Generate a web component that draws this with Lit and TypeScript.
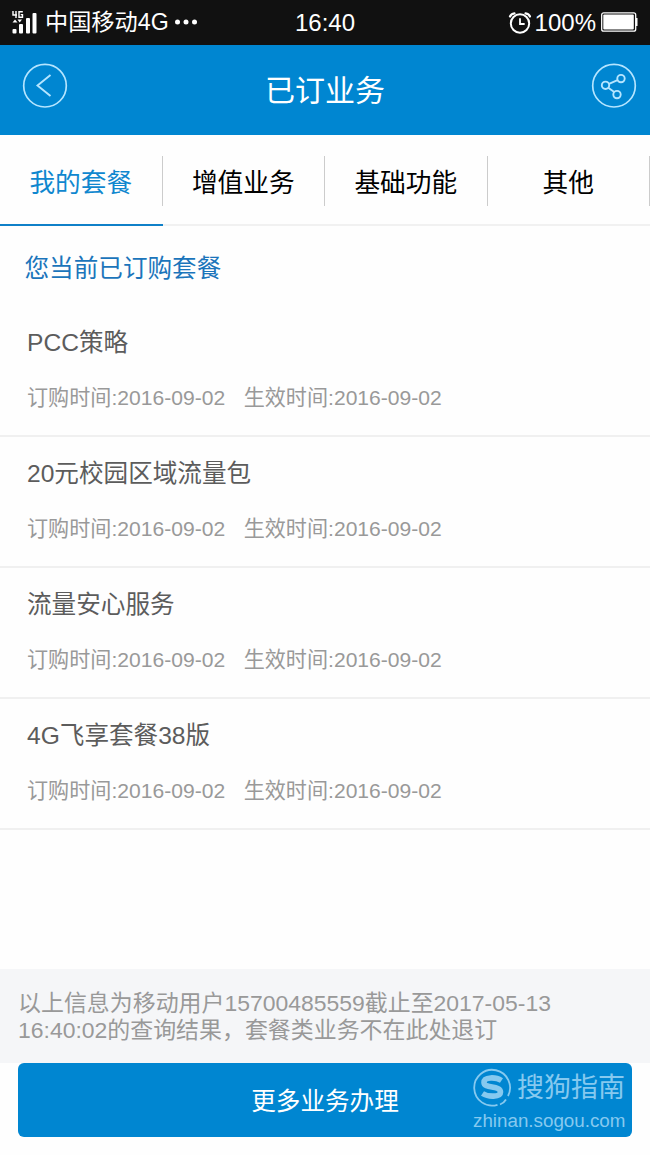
import { LitElement, html, css } from "lit";
import { customElement, state } from "lit/decorators.js";
import { classMap } from "lit/directives/class-map.js";

interface Plan {
  name: string;
  ordered: string;
  effective: string;
}

const TABS = ["我的套餐", "增值业务", "基础功能", "其他"];

const PLANS: Plan[] = [
  { name: "PCC策略", ordered: "2016-09-02", effective: "2016-09-02" },
  { name: "20元校园区域流量包", ordered: "2016-09-02", effective: "2016-09-02" },
  { name: "流量安心服务", ordered: "2016-09-02", effective: "2016-09-02" },
  { name: "4G飞享套餐38版", ordered: "2016-09-02", effective: "2016-09-02" },
];

@customElement("status-bar")
class StatusBar extends LitElement {
  static styles = css`
    :host {
      display: grid;
      grid-template-columns: 1fr auto 1fr;
      align-items: center;
      height: 45px;
      box-sizing: border-box;
      padding: 0 12px;
      background: #111;
      color: #fff;
      line-height: 45px;
      font-size: 24px;
    }
    .side { display: flex; align-items: center; height: 45px; }
    .end { justify-content: flex-end; }
    .carrier { margin-left: 8px; font-size: 23.2px; white-space: nowrap; }
    .dots { margin-left: 5px; margin-top: -1px; }
    .alarm { margin-right: 3px; }
    .battery { margin-left: 4px; margin-top: -1px; }
    svg { display: block; flex: none; }
  `;

  render() {
    return html`
      <div class="side">
        <svg width="25" height="24" viewBox="0 0 25 24" fill="#fff">
          <path d="M1 0v4h4M4 0v7M10.800 .7H7v5.600h3.500V3.600H8.700" fill="none" stroke="#fff" stroke-width="1.400" />
          <path d="M.5 11.500 3 8.500 5.500 11.500ZM5.500 8.500h4.500L7.700 11.500Z" />
          <rect x=".5" y="18" width="4" height="4.500" rx="1" />
          <rect x="7" y="13" width="4" height="9.500" rx="1" />
          <rect x="14" y="7" width="4" height="15.500" rx="1" />
          <rect x="20.500" y="2" width="4" height="20.500" rx="1" />
        </svg>
        <span class="carrier">中国移动4G</span>
        <svg class="dots" width="24" height="6" viewBox="0 0 24 6" fill="#fff">
          <circle cx="3.500" cy="3" r="2.500" />
          <circle cx="12" cy="3" r="2.500" />
          <circle cx="20.500" cy="3" r="2.500" />
        </svg>
      </div>
      <span>16:40</span>
      <div class="side end">
        <svg class="alarm" width="24" height="22" viewBox="0 0 24 22" fill="none" stroke="#fff" stroke-linecap="round">
          <circle cx="12" cy="11.500" r="9.200" stroke-width="2" />
          <path d="M12 7v5h4" stroke-width="1.800" />
          <path d="M2 4.500Q3 1.800 6.500 1.300M17.500 1.300Q21 1.800 22 4.500" stroke-width="2.200" />
        </svg>
        <span>100%</span>
        <svg class="battery" width="38" height="20" viewBox="0 0 38 20">
          <rect x="1.700" y=".8" width="34" height="18.400" rx="2" fill="none" stroke="#fff" stroke-width="1.300" />
          <rect x="3.300" y="2.500" width="30.500" height="15" rx="1" fill="#fff" />
          <path d="M36 6h1.500v8H36z" fill="#fff" />
        </svg>
      </div>
    `;
  }
}

@customElement("title-bar")
class TitleBar extends LitElement {
  static styles = css`
    :host {
      display: flex;
      align-items: center;
      justify-content: space-between;
      height: 90px;
      box-sizing: border-box;
      padding: 0 13px 9px 22px;
      background: #0086d1;
      color: #fff;
    }
    .title {
      margin: 10px 9px 0 0;
      font-size: 30px;
      line-height: 44px;
      font-weight: 400;
    }
    svg { display: block; }
  `;

  render() {
    return html`
      <svg width="46" height="46" viewBox="0 0 46 46" fill="none" stroke="#b5e5ff">
        <circle cx="23" cy="22.700" r="21.300" stroke-width="1.700" />
        <path d="M28.500 12 15.500 22.500 28.500 33" stroke-width="1.900" />
      </svg>
      <h1 class="title">已订业务</h1>
      <svg width="46" height="46" viewBox="0 0 46 46" fill="none" stroke="#b5e5ff">
        <circle cx="23" cy="22.700" r="21.300" stroke-width="1.700" />
        <g stroke-width="1.900">
          <circle cx="14.500" cy="22.300" r="3.700" />
          <circle cx="30" cy="15.600" r="3.700" />
          <circle cx="26" cy="31.600" r="3.700" />
          <path d="M18 20.900 26.500 17.100M17.300 24.800 23.200 29.100" />
        </g>
      </svg>
    `;
  }
}

@customElement("app-root")
class AppRoot extends LitElement {
  @state() private active = 0;

  static styles = css`
    :host {
      display: flex;
      flex-direction: column;
      height: 1155px;
      background: #fefefe;
      font-family: "Liberation Sans", "Noto Sans CJK SC", sans-serif;
      overflow: hidden;
    }
    .tabs {
      display: grid;
      grid-template-columns: repeat(4, 1fr);
      height: 91px;
      flex: none;
    }
    .tab {
      display: flex;
      align-items: center;
      border-bottom: 2px solid #f1f1f1;
      font-size: 25.700px;
      color: #000;
      cursor: pointer;
    }
    .label {
      flex: 1;
      height: 50px;
      box-sizing: border-box;
      padding-top: 2px;
      margin-top: 2px;
      line-height: 50px;
      text-align: center;
      border-right: 1px solid #ccc;
    }
    .active { color: #0f87cf; border-bottom-color: #0f80c8; }
    .heading {
      margin: 0;
      padding: 23px 24.500px 0;
      height: 57px;
      font-size: 24.600px;
      line-height: 40px;
      font-weight: 400;
      color: #1b75bb;
      flex: none;
    }
    .plans { margin: 0; padding: 0; list-style: none; }
    .plan {
      height: 131.100px;
      box-sizing: border-box;
      padding: 17px 27px 0;
      border-bottom: 2px solid #f0f0f0;
    }
    .name { font-size: 24.600px; line-height: 40px; color: #5c5c5c; }
    .dates {
      display: flex;
      gap: 18.500px;
      margin-top: 15px;
      font-size: 21.100px;
      line-height: 40px;
      color: #999;
    }
    .note {
      margin-top: auto;
      height: 94px;
      box-sizing: border-box;
      padding: 21px 60px 0 18px;
      background: #f5f6f8;
      color: #999;
      font-size: 22.950px;
      line-height: 27px;
      flex: none;
    }
    .footer { position: relative; margin: 0 18px 18px; flex: none; }
    .more {
      display: block;
      width: 100%;
      height: 74px;
      padding: 0 0 2px;
      border: 0;
      border-radius: 6px;
      background: #0086d1;
      color: #fff;
      font-family: inherit;
      font-size: 24.600px;
    }
    .watermark {
      position: absolute;
      right: 5px;
      top: 4px;
      width: 154px;
      color: #86c9ef;
      pointer-events: none;
    }
    .brand {
      display: flex;
      align-items: center;
      gap: 5px;
      height: 42px;
      font-size: 27px;
      line-height: 44px;
      white-space: nowrap;
    }
    .brand svg { display: block; flex: none; margin-top: -2px; }
    .site { font-size: 18.800px; line-height: 24px; white-space: nowrap; }
  `;

  render() {
    return html`
      <status-bar></status-bar>
      <title-bar></title-bar>
      <nav class="tabs">
        ${TABS.map(
          (label, i) => html`
            <div class=${classMap({ tab: true, active: i === this.active })} @click=${() => (this.active = i)}>
              <span class="label">${label}</span>
            </div>
          `
        )}
      </nav>
      <h2 class="heading">您当前已订购套餐</h2>
      <ul class="plans">
        ${PLANS.map(
          (plan) => html`
            <li class="plan">
              <div class="name">${plan.name}</div>
              <div class="dates">
                <span>订购时间:${plan.ordered}</span>
                <span>生效时间:${plan.effective}</span>
              </div>
            </li>
          `
        )}
      </ul>
      <div class="note">以上信息为移动用户15700485559截止至2017-05-13<br />16:40:02的查询结果，套餐类业务不在此处退订</div>
      <div class="footer">
        <button class="more">更多业务办理</button>
        <div class="watermark">
          <div class="brand">
            <svg width="39" height="39" viewBox="0 0 39 39" fill="none" stroke="#86c9ef">
              <path d="M24.500 36.800A17.900 17.900 0 1 1 35 28" stroke-width="1.800" />
              <path d="M27 36.500Q31 35 33 31.500" stroke-width="1.800" />
              <path d="M28.500 12.500C23 9 11 8.500 11 14.500C11 21 27.500 17 27.500 24C27.500 29.500 15 29 9.500 25.500" stroke-width="5.600" />
            </svg>
            <span>搜狗指南</span>
          </div>
          <div class="site">zhinan.sogou.com</div>
        </div>
      </div>
    `;
  }
}
